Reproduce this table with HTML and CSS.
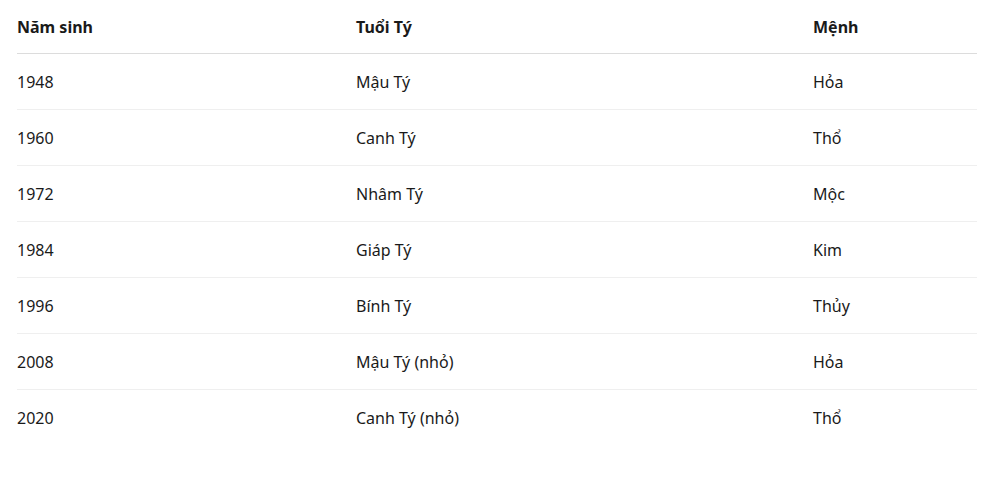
FILE: index.html
```html
<!DOCTYPE html>
<html lang="vi">
<head>
<meta charset="utf-8">
<link rel="stylesheet" href="styles.css">
</head>
<body>
<table class="zodiac">
  <colgroup>
    <col class="c1"><col class="c2"><col class="c3">
  </colgroup>
  <thead>
    <tr><th>Năm sinh</th><th>Tuổi Tý</th><th>Mệnh</th></tr>
  </thead>
  <tbody>
    <tr><td>1948</td><td>Mậu Tý</td><td>Hỏa</td></tr>
    <tr><td>1960</td><td>Canh Tý</td><td>Thổ</td></tr>
    <tr><td>1972</td><td>Nhâm Tý</td><td>Mộc</td></tr>
    <tr><td>1984</td><td>Giáp Tý</td><td>Kim</td></tr>
    <tr><td>1996</td><td>Bính Tý</td><td>Thủy</td></tr>
    <tr><td>2008</td><td>Mậu Tý (nhỏ)</td><td>Hỏa</td></tr>
    <tr><td>2020</td><td>Canh Tý (nhỏ)</td><td>Thổ</td></tr>
  </tbody>
</table>
</body>
</html>
```
FILE: styles.css
```css
html, body {
  margin: 0;
  background: #fff;
}
body {
  padding: 0 0 0 17px;
  font-family: "Noto Sans", "Open Sans", sans-serif;
  font-size: 16px;
  color: #1a1a1a;
}
.zodiac {
  width: 960px;
  border-collapse: collapse;
  table-layout: fixed;
}
.c1 { width: 339px; }
.c2 { width: 457px; }
.c3 { width: 164px; }
.zodiac th {
  text-align: left;
  font-weight: 700;
  height: 53px;
  padding: 0;
  border-bottom: 1px solid #dcdcdc;
  vertical-align: middle;
}
.zodiac td {
  height: 55px;
  padding: 0 0 0 0;
  border-bottom: 1px solid #efefef;
  vertical-align: middle;
}
.zodiac tbody tr:last-child td {
  border-bottom: none;
}
```
